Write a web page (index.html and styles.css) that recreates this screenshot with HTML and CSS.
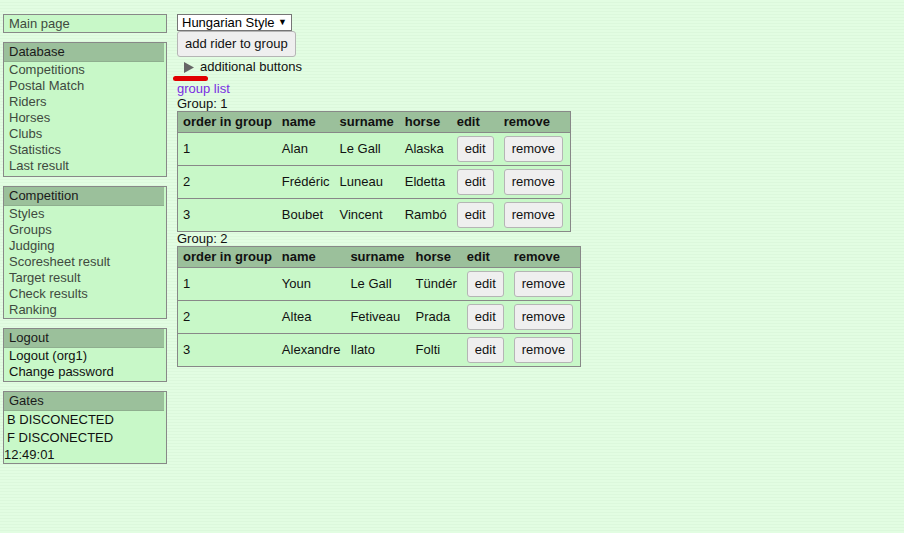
FILE: index.html
```html
<!DOCTYPE html>
<html>
<head>
<meta charset="utf-8">
<link rel="stylesheet" href="styles.css">
</head>
<body>
<div class="layout">
  <nav class="sidebar">
    <div class="box main-box"><a class="item" href="#">Main page</a></div>
    <div class="box db-box">
      <div class="box-head">Database</div>
      <a class="item" href="#">Competitions</a>
      <a class="item" href="#">Postal Match</a>
      <a class="item" href="#">Riders</a>
      <a class="item" href="#">Horses</a>
      <a class="item" href="#">Clubs</a>
      <a class="item" href="#">Statistics</a>
      <a class="item" href="#">Last result</a>
    </div>
    <div class="box">
      <div class="box-head">Competition</div>
      <a class="item" href="#">Styles</a>
      <a class="item" href="#">Groups</a>
      <a class="item" href="#">Judging</a>
      <a class="item" href="#">Scoresheet result</a>
      <a class="item" href="#">Target result</a>
      <a class="item" href="#">Check results</a>
      <a class="item" href="#">Ranking</a>
    </div>
    <div class="box logout-box">
      <div class="box-head">Logout</div>
      <a class="item dark" href="#">Logout (org1)</a>
      <a class="item dark" href="#">Change password</a>
    </div>
    <div class="box">
      <div class="box-head">Gates</div>
      <div class="gate">B DISCONECTED</div>
      <div class="gate">F DISCONECTED</div>
      <div class="clock">12:49:01</div>
    </div>
  </nav>
  <main class="content">
    <div class="select">Hungarian Style <span class="arrow">▼</span></div>
    <div><button class="btn">add rider to group</button></div>
    <div class="summary"><svg class="tri" width="10" height="11" viewBox="0 0 10 11"><polygon points="0,0 10,5.5 0,11" fill="#666"/></svg><span>additional buttons</span></div>
    <div class="red-mark"></div>
    <a class="group-link" href="#">group list</a>
    <div class="group-title">Group: 1</div>
    <table class="grid">
      <tr><th>order in group</th><th>name</th><th>surname</th><th>horse</th><th>edit</th><th>remove</th></tr>
      <tr><td>1</td><td>Alan</td><td>Le Gall</td><td>Alaska</td><td><button class="btn">edit</button></td><td><button class="btn">remove</button></td></tr>
      <tr><td>2</td><td>Frédéric</td><td>Luneau</td><td>Eldetta</td><td><button class="btn">edit</button></td><td><button class="btn">remove</button></td></tr>
      <tr><td>3</td><td>Boubet</td><td>Vincent</td><td>Rambó</td><td><button class="btn">edit</button></td><td><button class="btn">remove</button></td></tr>
    </table>
    <div class="group-title second">Group: 2</div>
    <table class="grid">
      <tr><th>order in group</th><th>name</th><th>surname</th><th>horse</th><th>edit</th><th>remove</th></tr>
      <tr><td>1</td><td>Youn</td><td>Le Gall</td><td>Tündér</td><td><button class="btn">edit</button></td><td><button class="btn">remove</button></td></tr>
      <tr><td>2</td><td>Altea</td><td>Fetiveau</td><td>Prada</td><td><button class="btn">edit</button></td><td><button class="btn">remove</button></td></tr>
      <tr><td>3</td><td>Alexandre</td><td>Ilato</td><td>Folti</td><td><button class="btn">edit</button></td><td><button class="btn">remove</button></td></tr>
    </table>
  </main>
</div>
</body>
</html>
```
FILE: styles.css
```css
html, body {
  margin: 0;
  padding: 0;
}
body {
  font-family: "Liberation Sans", Arial, sans-serif;
  font-size: 13px;
  line-height: 16px;
  color: #111;
  min-height: 533px;
  background-color: #e2fde2;
  background-image: repeating-linear-gradient(to bottom, #e2fde2 0, #e2fde2 2px, #dcf8dc 2px, #dcf8dc 3px);
}
.layout {
  display: flex;
  gap: 10px;
  padding: 14px 0 0 3px;
}
.sidebar {
  width: 164px;
  display: flex;
  flex-direction: column;
  gap: 9px;
}
.box {
  background: #c8f8c8;
  border: 1px solid #888;
  display: flex;
  flex-direction: column;
}
.db-box { padding-bottom: 2px; }
.logout-box { padding-bottom: 1px; }
.box-head {
  background: #9bc09b;
  height: 19px;
  line-height: 16px;
  padding-left: 5px;
  margin-right: 2px;
  color: #1a1a1a;
  box-sizing: border-box;
  padding-top: 1px;
  border-bottom: 1px solid #8fae8f;
}
.item {
  display: block;
  padding-left: 5px;
  line-height: 16px;
  color: #404a40;
  text-decoration: none;
}
.item.dark { color: #111; }
.main-box .item { line-height: 17px; }
.gate {
  padding-left: 3px;
  line-height: 18px;
  color: #111;
}
.clock {
  line-height: 16px;
  color: #111;
}
.content {
  display: flex;
  flex-direction: column;
  align-items: flex-start;
}
.select {
  box-sizing: border-box;
  height: 17px;
  width: 115px;
  border: 1px solid #767676;
  background: #fff;
  line-height: 15px;
  padding-left: 4px;
  padding-right: 4px;
  color: #000;
  display: flex;
  justify-content: space-between;
}
.arrow { font-size: 9px; }
.btn {
  font-family: "Liberation Sans", Arial, sans-serif;
  font-size: 13px;
  line-height: 16px;
  padding: 4px 7px;
  border: 1px solid #b5b5b5;
  border-radius: 3px;
  background: #efefef;
  color: #111;
  margin: 0;
}
.summary {
  display: flex;
  align-items: center;
  height: 20px;
  padding-left: 7px;
}
.tri { margin-right: 6px; }
.red-mark {
  width: 35px;
  height: 5px;
  background: #e00000;
  border-radius: 3px;
  margin-left: -4px;
  margin-top: -1px;
}
.group-link {
  color: #7a2ee3;
  text-decoration: none;
  line-height: 15px;
}
.group-title {
  line-height: 15px;
  color: #111;
}
.group-title.second { line-height: 14px; }
.grid {
  border-collapse: collapse;
  background: #c8f8c8;
  border: 1px solid #888;
}
.grid th {
  background: #9bc09b;
  text-align: left;
  font-weight: bold;
  padding: 2px 5px;
  line-height: 16px;
  white-space: nowrap;
  border-bottom: 1px solid #888;
}
.grid td {
  padding: 3px 5px;
  line-height: 16px;
  white-space: nowrap;
  border-top: 1px solid #888;
}
.grid th:nth-child(3) { padding-right: 6px; }
.grid td:last-child, .grid th:last-child { padding-right: 7px; }
```
